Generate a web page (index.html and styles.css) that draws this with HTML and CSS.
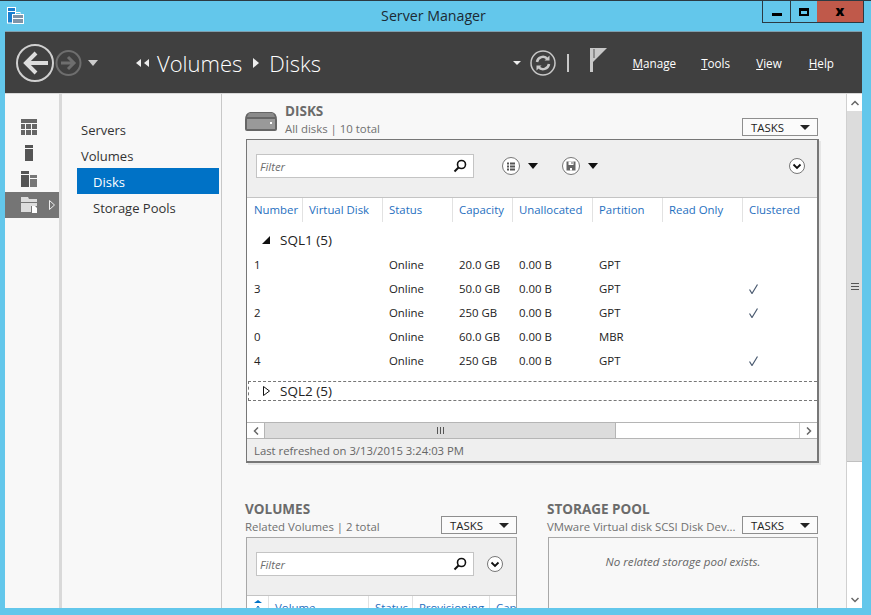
FILE: index.html
```html
<!DOCTYPE html>
<html lang="en">
<head>
  <meta charset="UTF-8">
  <title>Server Manager</title>
  <link rel="stylesheet" href="styles.css">
</head>
<body>

  <div class="titlebar">
    <svg class="app-icon" width="17" height="17" viewBox="0 0 17 17">
      <rect x="0.500" y="0.500" width="8" height="15.500" fill="#1a7fd0" stroke="#fff"/>
      <rect x="1" y="4" width="7" height="1" fill="#fff"/>
      <rect x="5.500" y="7.500" width="11" height="9" fill="#7f94a8" stroke="#fff"/>
      <rect x="9" y="5.500" width="4" height="2" fill="none" stroke="#fff"/>
      <rect x="6" y="11" width="10" height="1" fill="#fff"/>
    </svg>
    <div class="title">Server Manager</div>
    <div class="win-buttons">
      <div class="win-btn min"><span class="min-glyph"></span></div>
      <div class="win-btn max"><span class="max-glyph"></span></div>
      <div class="win-btn close">x</div>
    </div>
  </div>

  <div class="window">
    <header class="header">
      <svg class="nav-icon" width="96" height="44" viewBox="0 0 96 44">
        <circle cx="19" cy="22" r="18" fill="none" stroke="#d0d0d0" stroke-width="2"/>
        <path d="M32 22H11M20 12l-10 10 10 10" fill="none" stroke="#ddd" stroke-width="4"/>
        <circle cx="52.500" cy="22" r="12" fill="none" stroke="#6e6e6e" stroke-width="2"/>
        <path d="M45 22h13M52 16l6 6-6 6" fill="none" stroke="#6e6e6e" stroke-width="3"/>
        <path d="M72 19h10l-5 6z" fill="#ccc"/>
      </svg>
      <div class="crumbs">
        <svg width="13" height="8" viewBox="0 0 13 8"><path d="M5 0v8L0 4zM13 0v8L8 4z" fill="#eee"/></svg>
        <span class="crumb">Volumes</span>
        <svg width="6" height="10" viewBox="0 0 6 10"><path d="M0 0v10l6-5z" fill="#eee"/></svg>
        <span class="crumb">Disks</span>
      </div>
      <div class="header-tools">
        <svg class="tool-drop" width="8" height="4" viewBox="0 0 8 4"><path d="M0 0h8L4 4z" fill="#eee"/></svg>
        <svg class="tool-refresh" width="26" height="26" viewBox="0 0 26 26">
          <circle cx="13" cy="13" r="12" fill="none" stroke="#c8c8c8" stroke-width="1.500"/>
          <path d="M7 12a6 6 0 0 1 10.500-3M19 14a6 6 0 0 1-10.500 3" fill="none" stroke="#c8c8c8" stroke-width="2.500"/>
          <path d="M19.500 5.500v5h-5zM6.500 20.500v-5h5z" fill="#c8c8c8"/>
        </svg>
        <span class="tool-sep"></span>
        <svg class="tool-flag" width="18" height="24" viewBox="0 0 18 24">
          <rect width="3" height="24" fill="#c8c8c8"/>
          <path d="M3 0h14L3 14z" fill="#c8c8c8"/>
          <rect x="3.500" y="1" width="1" height="9" fill="#555"/>
        </svg>
        <nav class="menu">
          <a class="menu-item"><u>M</u>anage</a>
          <a class="menu-item"><u>T</u>ools</a>
          <a class="menu-item"><u>V</u>iew</a>
          <a class="menu-item"><u>H</u>elp</a>
        </nav>
      </div>
    </header>

    <div class="body">
      <aside class="rail">
        <div class="rail-item">
          <svg width="16" height="16" viewBox="0 0 16 16"><path d="M0 0h16v4H0zM0 5h4v5H0zM5 5h5v5H5zM11 5h5v5h-5zM0 11h4v5H0zM5 11h5v5H5zM11 11h5v5h-5z" fill="#666"/></svg>
        </div>
        <div class="rail-item">
          <svg width="16" height="16" viewBox="0 0 16 16"><path d="M4 0h8v3H4zM4 4h8v12H4z" fill="#555"/></svg>
        </div>
        <div class="rail-item">
          <svg width="16" height="16" viewBox="0 0 16 16"><path d="M0 0h8v3H0zM0 4h8v12H0z" fill="#555"/><path d="M9 4h7v3H9zM9 8h7v8H9z" fill="#777"/></svg>
        </div>
        <div class="rail-item selected">
          <svg width="16" height="16" viewBox="0 0 16 16"><path d="M0 0h7l1 2h8v3H0zM0 6h16v3h-6v6H0z" fill="#ddd"/><path d="M11 9h3l2 2v5h-5z" fill="#fff"/></svg>
          <svg class="rail-arrow" width="6" height="10" viewBox="0 0 6 10"><path d="M.5 .5v9l5-4.500z" fill="none" stroke="#eee"/></svg>
        </div>
      </aside>

      <nav class="tree">
        <div class="tree-item">Servers</div>
        <div class="tree-item">Volumes</div>
        <div class="tree-item sub active">Disks</div>
        <div class="tree-item sub">Storage Pools</div>
      </nav>

      <main class="main">
        <section class="disks">
          <div class="section-head">
            <svg class="disk-icon" width="32" height="19" viewBox="0 0 32 19">
              <path d="M0 8Q0 1 5 0h22q5 1 5 8v9q0 2-2 2H2q-2 0-2-2z" fill="#666"/>
              <path d="M4 1h24l2 4H2z" fill="#8a8a8a"/>
              <rect x="2" y="7" width="28" height="10" fill="#999"/>
              <rect x="25" y="10" width="2" height="2" fill="#fff"/>
            </svg>
            <div class="section-text">
              <h2 class="section-title">DISKS</h2>
              <div class="section-sub">All disks | 10 total</div>
            </div>
            <button class="tasks">TASKS <span class="caret"></span></button>
          </div>

          <div class="tile tile-disks">
            <div class="toolbar">
              <div class="filter">
                <span>Filter</span>
                <svg width="14" height="14" viewBox="0 0 14 14"><circle cx="8.500" cy="5.500" r="4" fill="none" stroke="#111" stroke-width="1.600"/><path d="M5.500 8.500 1.500 12.500" stroke="#111" stroke-width="2"/></svg>
              </div>
              <svg class="tb-btn" width="18" height="18" viewBox="0 0 18 18">
                <circle cx="9" cy="9" r="8.500" fill="#fff" stroke="#777"/>
                <path d="M5 5.500h2v2H5zM8 5.500h5v2H8zM5 8.500h2v2H5zM8 8.500h5v2H8zM5 11.500h2v2H5zM8 11.500h5v2H8z" fill="#555"/>
              </svg>
              <span class="caret big"></span>
              <svg class="tb-btn save" width="18" height="18" viewBox="0 0 18 18">
                <circle cx="9" cy="9" r="8.500" fill="#fff" stroke="#777"/>
                <path d="M4.500 4.500h9v9h-9z" fill="#666"/>
                <path d="M6.500 4.500h5V8h-5zM8 11h2v2.500H8z" fill="#fff"/>
                <path d="M9.500 5h1v2h-1z" fill="#666"/>
              </svg>
              <span class="caret big"></span>
              <svg class="tb-btn expand" width="16" height="16" viewBox="0 0 16 16">
                <circle cx="8" cy="8" r="7.500" fill="#fff" stroke="#777"/>
                <path d="M4.500 6.500 8 10l3.500-3.500" fill="none" stroke="#111" stroke-width="1.800"/>
              </svg>
            </div>

            <div class="grid">
              <div class="row head">
                <div>Number</div><div>Virtual Disk</div><div>Status</div><div>Capacity</div>
                <div>Unallocated</div><div>Partition</div><div>Read Only</div><div>Clustered</div>
              </div>
              <div class="group first">
                <svg width="8" height="8" viewBox="0 0 8 8"><path d="M8 0v8H0z" fill="#111"/></svg>
                SQL1 (5)
              </div>
              <div class="row">
                <div>1</div><div></div><div>Online</div><div>20.0 GB</div><div>0.00 B</div><div>GPT</div><div></div><div></div>
              </div>
              <div class="row">
                <div>3</div><div></div><div>Online</div><div>50.0 GB</div><div>0.00 B</div><div>GPT</div><div></div>
                <div class="check"><svg width="9" height="10" viewBox="0 0 9 10"><path d="M.5 5.500 3 9.500 8.500 .5" fill="none" stroke="#4a5a70" stroke-width="1.200"/></svg></div>
              </div>
              <div class="row">
                <div>2</div><div></div><div>Online</div><div>250 GB</div><div>0.00 B</div><div>GPT</div><div></div>
                <div class="check"><svg width="9" height="10" viewBox="0 0 9 10"><path d="M.5 5.500 3 9.500 8.500 .5" fill="none" stroke="#4a5a70" stroke-width="1.200"/></svg></div>
              </div>
              <div class="row">
                <div>0</div><div></div><div>Online</div><div>60.0 GB</div><div>0.00 B</div><div>MBR</div><div></div><div></div>
              </div>
              <div class="row">
                <div>4</div><div></div><div>Online</div><div>250 GB</div><div>0.00 B</div><div>GPT</div><div></div>
                <div class="check"><svg width="9" height="10" viewBox="0 0 9 10"><path d="M.5 5.500 3 9.500 8.500 .5" fill="none" stroke="#4a5a70" stroke-width="1.200"/></svg></div>
              </div>
              <div class="group second">
                <svg width="7" height="10" viewBox="0 0 7 10"><path d="M.5 .5v9l6-4.500z" fill="none" stroke="#111"/></svg>
                SQL2 (5)
              </div>
            </div>

            <div class="hscroll">
              <div class="hs-btn"><svg width="6" height="8" viewBox="0 0 6 8"><path d="M5 .5 1.500 4 5 7.500" fill="none" stroke="#666" stroke-width="1.500"/></svg></div>
              <div class="hs-thumb"><span class="grip"></span></div>
              <div class="hs-rest"></div>
              <div class="hs-btn"><svg width="6" height="8" viewBox="0 0 6 8"><path d="M1 .5 4.500 4 1 7.500" fill="none" stroke="#666" stroke-width="1.500"/></svg></div>
            </div>
            <div class="tile-footer">Last refreshed on 3/13/2015 3:24:03 PM</div>
          </div>
        </section>

        <div class="lower">
          <section class="lower-left">
            <div class="section-head">
              <div class="section-text">
                <h2 class="section-title">VOLUMES</h2>
                <div class="section-sub">Related Volumes | 2 total</div>
              </div>
              <button class="tasks">TASKS <span class="caret"></span></button>
            </div>
            <div class="tile tile-small">
              <div class="toolbar">
                <div class="filter">
                  <span>Filter</span>
                  <svg width="14" height="14" viewBox="0 0 14 14"><circle cx="8.500" cy="5.500" r="4" fill="none" stroke="#111" stroke-width="1.600"/><path d="M5.500 8.500 1.500 12.500" stroke="#111" stroke-width="2"/></svg>
                </div>
                <svg class="tb-btn expand-small" width="16" height="16" viewBox="0 0 16 16">
                  <circle cx="8" cy="8" r="7.500" fill="#fff" stroke="#777"/>
                  <path d="M4.500 6.500 8 10l3.500-3.500" fill="none" stroke="#111" stroke-width="1.800"/>
                </svg>
              </div>
              <div class="row head vol-head">
                <div class="sort">
                  <svg width="8" height="12" viewBox="0 0 8 12"><path d="M0 3 4 0l4 3z" fill="#0072c6"/><path d="M4 6 1 11h6z" fill="none" stroke="#0072c6"/></svg>
                </div>
                <div>Volume</div><div>Status</div><div>Provisioning</div><div>Cap</div>
              </div>
            </div>
          </section>

          <section class="lower-right">
            <div class="section-head">
              <div class="section-text">
                <h2 class="section-title">STORAGE POOL</h2>
                <div class="section-sub">VMware Virtual disk SCSI Disk Dev...</div>
              </div>
              <button class="tasks">TASKS <span class="caret"></span></button>
            </div>
            <div class="tile tile-empty">No related storage pool exists.</div>
          </section>
        </div>
      </main>

      <div class="vscroll">
        <div class="vs-btn"><svg width="8" height="6" viewBox="0 0 8 6"><path d="M.5 5 4 1.500 7.500 5" fill="none" stroke="#666" stroke-width="1.500"/></svg></div>
        <div class="vs-thumb"><span class="vgrip"></span></div>
        <div class="vs-rest"></div>
        <div class="vs-btn"><svg width="8" height="6" viewBox="0 0 8 6"><path d="M.5 1 4 4.500 7.500 1" fill="none" stroke="#666" stroke-width="1.500"/></svg></div>
      </div>
    </div>
  </div>

</body>
</html>
```

FILE: styles.css
```css
* {
  box-sizing: border-box;
}

html, body {
  margin: 0;
  height: 615px;
  overflow: hidden;
}

body {
  display: flex;
  flex-direction: column;
  padding: 0 9px 7px 5px;
  background-color: #63c7eb;
  border-top: 1px solid #2b3a42;
  font-family: 'Open Sans', 'Noto Sans', sans-serif;
  font-size: 11.4px;
  color: #222;
}

/* title bar */
.titlebar {
  display: grid;
  grid-template-columns: 1fr auto 1fr;
  height: 30px;
  flex: none;
}

.app-icon {
  margin: 6px 0 0 2px;
}

.title {
  padding-top: 5px;
  font-size: 14.2px;
  color: #1c2a33;
}

.win-buttons {
  display: flex;
  justify-self: end;
  height: 22px;
  margin-right: -2px;
  border: 1px solid #2b3a42;
  border-top: none;
}

.win-btn {
  display: flex;
  align-items: center;
  justify-content: center;
}

.min {
  width: 28px;
  border-right: 1px solid #2b3a42;
}

.max {
  width: 26px;
}

.close {
  width: 46px;
  background-color: #c0594a;
  color: #000;
  font-weight: 800;
  font-size: 14px;
  padding-bottom: 3px;
}

.min-glyph {
  width: 10px;
  height: 3px;
  margin-top: 5px;
  background-color: #000;
}

.max-glyph {
  width: 10px;
  height: 8px;
  border: 2px solid #000;
  border-top-width: 3px;
}

/* window */
.window {
  flex: 1;
  min-height: 0;
  display: flex;
  flex-direction: column;
  background-color: #f8f8f8;
}

.header {
  display: flex;
  align-items: center;
  height: 62px;
  flex: none;
  background-color: #404040;
  border-top: 1px solid #7f9fae;
  color: #fff;
}

.nav-icon {
  margin-left: 11px;
}

.crumbs {
  display: flex;
  align-items: center;
  margin-left: 24px;
}

.crumbs svg:first-child {
  margin-right: -3px;
}

.crumb {
  font-size: 22px;
  font-weight: 300;
  color: #fff;
  margin: 0 11px;
}

.crumb:last-child {
  margin-left: 10px;
}

.header-tools {
  display: flex;
  align-items: center;
  margin-left: auto;
  padding-right: 28px;
}

.tool-drop {
  margin-right: 9px;
}

.tool-sep {
  width: 2px;
  height: 18px;
  margin: 0 21px 0 11px;
  background-color: #c8c8c8;
}

.tool-flag {
  margin-bottom: 6px;
}

.menu {
  display: flex;
  gap: 25px;
  margin: 0 0 0 25px;
}

.menu-item {
  color: #fff;
  font-size: 11.7px;
}

.menu-item:nth-child(3) {
  margin-left: 1px;
}

.menu-item:last-child {
  margin-left: 2px;
}

/* below header */
.body {
  flex: 1;
  min-height: 0;
  display: flex;
  border-top: 1px solid #d8d8d8;
}

.rail {
  width: 57px;
  flex: none;
  padding-top: 20px;
  border-right: 3px solid #d9d9d9;
}

.rail-item {
  display: flex;
  align-items: center;
  height: 26px;
  padding-left: 16px;
}

.rail-item.selected {
  background-color: #757575;
}

.rail-arrow {
  margin-left: 12px;
}

.tree {
  width: 160px;
  flex: none;
  padding: 22px 2px 0 15px;
  border-right: 1px solid #c8c8c8;
  font-size: 13px;
}

.tree-item {
  height: 26px;
  line-height: 28px;
  padding-left: 4px;
  color: #333;
}

.tree-item.sub {
  padding-left: 16px;
}

.tree-item.active {
  background-color: #0072c6;
  color: #fff;
}

/* main column */
.main {
  flex: 1;
  min-width: 0;
  overflow: hidden;
  padding: 8px 0 0 23px;
}

.section-head {
  display: flex;
  align-items: flex-end;
  height: 36px;
  margin-bottom: 1px;
}

.disks .section-head {
  width: 573px;
}

.disk-icon {
  margin: 0 8px 7px 0;
}

.section-text {
  margin-bottom: 1px;
}

.section-title {
  margin: 0;
  font-size: 13.5px;
  line-height: 18px;
  font-weight: 700;
  color: #6b6b6b;
}

.section-sub {
  font-size: 11.4px;
  line-height: 17px;
  color: #707070;
  white-space: nowrap;
}

.tasks {
  display: flex;
  align-items: center;
  justify-content: space-between;
  width: 76px;
  height: 18px;
  margin: 0 0 2px auto;
  padding: 0 7px 0 8px;
  background-color: #fbfbfb;
  border: 1px solid #8e8e8e;
  border-radius: 0;
  font-family: inherit;
  font-size: 11.4px;
  color: #222;
}

.caret {
  width: 0;
  height: 0;
  border-left: 5px solid transparent;
  border-right: 5px solid transparent;
  border-top: 5px solid #222;
}

.tile {
  margin-left: 1px;
  border: 1px solid #777;
}

.tile-disks {
  display: flex;
  flex-direction: column;
  width: 573px;
  height: 324px;
  border-width: 1px 2px 2px 1px;
  box-shadow: 2px 2px 0 #e6e6e6;
}

.toolbar {
  display: flex;
  align-items: center;
  height: 58px;
  flex: none;
  padding: 0 12px 5px 9px;
  background-color: #efefef;
  border-bottom: 1px solid #c4c4c4;
}

.filter {
  display: flex;
  align-items: center;
  justify-content: space-between;
  width: 218px;
  height: 24px;
  padding: 0 6px 0 3px;
  background-color: #fff;
  border: 1px solid #c4c4c4;
  font-style: italic;
  color: #6e6e6e;
}

.tb-btn {
  margin-left: 28px;
  flex: none;
}

.tb-btn.save {
  margin-left: 24px;
}

.tb-btn.expand {
  margin-left: auto;
}

.tb-btn.expand-small {
  margin-left: 13px;
}

.caret.big {
  margin-left: 8px;
  border-top-width: 6px;
  border-top-color: #111;
}

/* grid */
.grid {
  flex: 1;
  min-height: 0;
  background-color: #fff;
}

.row {
  display: grid;
  grid-template-columns: 55px 80px 70px 60px 80px 70px 80px 75px;
  height: 24px;
  align-items: center;
  white-space: nowrap;
}

.row > div {
  padding-left: 7px;
  overflow: hidden;
}

.row.head {
  color: #1f6fc0;
}

.row.head > div {
  height: 24px;
  line-height: 24px;
  padding-left: 6px;
  border-left: 1px solid #e2e2e2;
}

.row.head > div:first-child {
  padding-left: 7px;
  border-left: none;
}

.check {
  height: 12px;
}

.group {
  display: flex;
  align-items: center;
  gap: 10px;
  font-size: 13.5px;
  color: #222;
}

.group.first {
  height: 31px;
  margin-bottom: -1px;
  padding: 5px 0 0 15px;
}

.group.second {
  height: 20px;
  margin: 9px 0 0 1px;
  padding-left: 14px;
  border-top: 1px dashed #777;
  border-bottom: 1px dashed #777;
  border-left: 1px dashed #777;
}

.hscroll {
  display: flex;
  height: 17px;
  flex: none;
  background-color: #fff;
  border-top: 1px solid #b5b5b5;
  border-bottom: 1px solid #b5b5b5;
}

.hs-btn {
  display: flex;
  align-items: center;
  justify-content: center;
  width: 17px;
}

.hs-thumb {
  display: flex;
  align-items: center;
  justify-content: center;
  width: 352px;
  background-color: #dcdcdc;
  border-left: 1px solid #b5b5b5;
  border-right: 1px solid #b5b5b5;
}

.grip {
  width: 7px;
  height: 7px;
  background: repeating-linear-gradient(90deg, #555 0 1px, transparent 1px 3px);
}

.hs-rest {
  flex: 1;
  border-right: 1px solid #d0d0d0;
}

.tile-footer {
  height: 22px;
  flex: none;
  padding: 4px 0 0 7px;
  background-color: #efefef;
  font-size: 11.3px;
  color: #666;
}

/* lower tiles */
.lower {
  display: flex;
  gap: 30px;
  margin-top: 37px;
}

.lower-left {
  width: 272px;
}

.lower-right {
  width: 271px;
}

.tile-small, .tile-empty {
  height: 90px;
  border-color: #a8a8a8;
}

.row.vol-head {
  grid-template-columns: 21px 100px 44px 77px 30px;
  background-color: #fff;
}

.row.vol-head > .sort {
  padding-left: 6px;
  border-left: none;
}

.tile-empty {
  padding-top: 16px;
  text-align: center;
  font-style: italic;
  font-size: 11.6px;
  color: #666;
}

/* page scrollbar */
.vscroll {
  display: flex;
  flex-direction: column;
  width: 16px;
  flex: none;
  background-color: #fff;
  border-left: 1px solid #d0d0d0;
}

.vs-btn {
  display: flex;
  align-items: center;
  justify-content: center;
  height: 17px;
  flex: none;
}

.vs-thumb {
  display: flex;
  align-items: center;
  justify-content: center;
  height: 351px;
  flex: none;
  background-color: #dcdcdc;
  border-bottom: 1px solid #c0c0c0;
}

.vgrip {
  width: 8px;
  height: 7px;
  margin-top: 1px;
  background: repeating-linear-gradient(0deg, #555 0 1px, transparent 1px 3px);
}

.vs-rest {
  flex: 1;
}
```
